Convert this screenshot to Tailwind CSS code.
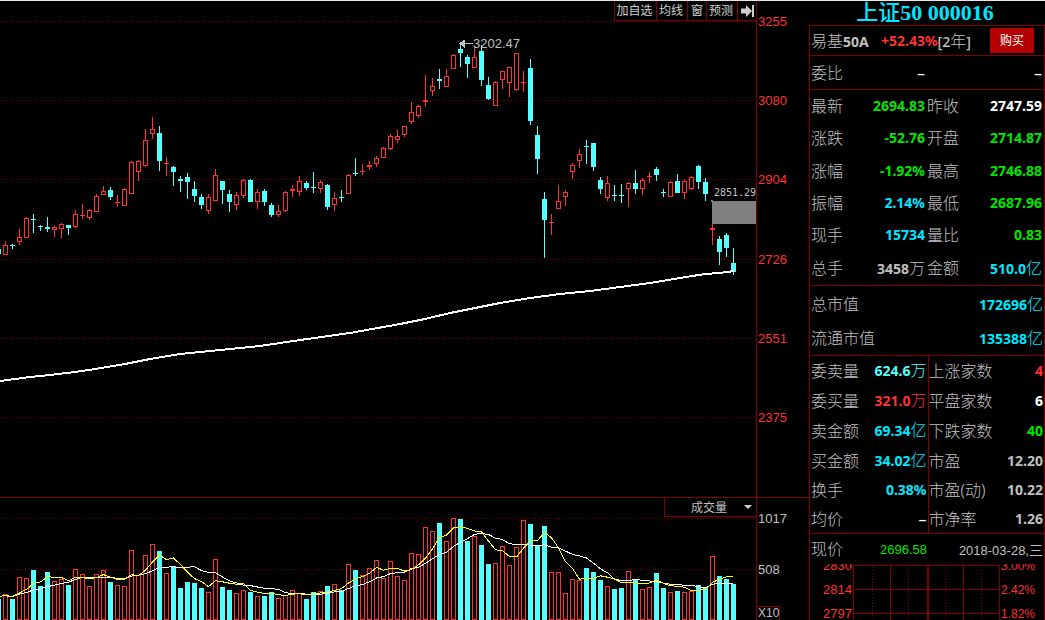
<!DOCTYPE html>
<html lang="zh-CN">
<head>
<meta charset="utf-8">
<title>上证50 000016</title>
<script src="https://cdn.jsdelivr.net/npm/@tailwindcss/browser@4"></script>
</head>
<body class="flex h-screen flex-col overflow-hidden border-t border-[#e8e8e8] bg-black font-['Liberation_Sans','Noto_Sans_CJK_SC',sans-serif] text-[13px] text-[#c0c0c0]">
<div class="flex min-h-0 flex-1">

  <main class="relative flex min-w-0 flex-1 flex-col">
    <div class="flex h-[496px] shrink-0">
      <section class="relative min-w-0 flex-1 border-r border-[#800000]" aria-label="K线图">
        <svg id="price" class="absolute inset-0 size-full" shape-rendering="crispEdges"></svg>
        <nav class="absolute top-0 right-0 flex h-5 border-b border-l border-[#800000] bg-black text-[12px] leading-[18px] text-[#d0d0d0] divide-x divide-[#800000]">
          <button class="w-[42px] pt-px pr-0.5">加自选</button>
          <button class="w-[31px] pt-px pr-0.5">均线</button>
          <button class="w-[19px] pt-px">窗</button>
          <button class="w-[31px] pt-px pr-0.5">预测</button>
          <button class="flex w-[18px] items-center justify-center" aria-label="收起">
            <svg width="13" height="12" fill="#d0d0d0"><path d="M0 3.5h5V0l6 6-6 6V8.500H0zM11 0h2v12h-2z"/></svg>
          </button>
        </nav>
      </section>
      <div class="flex w-[52px] flex-col text-[#ff3232]">
        <div class="flex h-[421px] flex-col justify-between pt-[13px] pl-px leading-4">
          <span>3255</span><span>3080</span><span>2904</span><span>2726</span><span>2551</span><span class="-mb-1">2375</span>
        </div>
      </div>
    </div>
    <div class="flex min-h-0 flex-1 border-t border-[#800000]">
      <section class="relative min-w-0 flex-1 border-r border-[#800000]" aria-label="成交量图">
        <svg id="volume" class="absolute inset-0 size-full" shape-rendering="crispEdges"></svg>
        <div class="absolute top-0 right-0 flex h-[19px] w-[92px] items-center border-b border-l border-[#800000] bg-black">
          <select aria-label="指标" class="h-full w-full appearance-none bg-transparent pt-0.5 pl-[26px] text-[12px] leading-4 text-[#c0c0c0] outline-none"><option>成交量</option></select>
          <svg class="pointer-events-none absolute right-[4px]" width="8" height="4" fill="#d0d0d0"><path d="M0 0h8L4 4z"/></svg>
        </div>
      </section>
      <div class="flex w-[52px] flex-col justify-between pt-[13px] leading-4">
        <div class="flex flex-col gap-[35px] pl-px"><span>1017</span><span>508</span></div>
        <div class="w-[23px] border-t border-r border-[#800000] text-[12px] leading-[13px]"><span class="pl-px">X10</span></div>
      </div>
    </div>
  </main>

  <aside class="flex w-[236px] shrink-0 flex-col">
    <h1 class="h-6 pr-1 text-center font-['Liberation_Serif','Noto_Sans_CJK_SC',serif] text-[22px] leading-6 font-bold text-[#00e6ff]"><span class="font-medium">上证</span>50 000016</h1>

    <div class="flex min-h-0 flex-1 flex-col divide-y divide-[#800000] border-x border-t border-[#800000] font-['Noto_Sans','Noto_Sans_CJK_SC',sans-serif] text-[14px] font-bold">
      <div class="flex h-[30px] shrink-0 items-center pl-px">
        <span class="w-[70px]"><span class="text-[16px] font-light">易基</span>50A</span>
        <span class="text-[#ff3232]">+52.43%</span><span class="font-medium">[2<span class="text-[16px] font-light">年</span>]</span>
        <button class="mr-[10px] ml-auto h-[25px] w-11 bg-[#b40000] text-[12px] font-normal text-white">购买</button>
      </div>
      <div class="flex h-[34px] shrink-0 items-center pr-0.5 pl-px">
        <span class="w-[69px] text-[16px] font-light">委比</span>
        <span class="w-[45px] text-right text-[16px] font-normal text-white">–</span>
        <span class="ml-auto text-[16px] font-normal text-white">–</span>
      </div>

      <div class="h-[196px] shrink-0">
        <table class="h-[195px] w-full table-fixed border-collapse leading-6">
          <colgroup><col class="w-[46px]"><col class="w-[70px]"><col class="w-[48px]"><col></colgroup>
          <tbody class="[&_th]:p-0 [&_th]:pl-px [&_th]:text-left [&_th]:text-[16px] [&_th]:font-light [&_th]:whitespace-nowrap [&_td]:p-0 [&_td]:pr-px [&_td]:text-right [&_td]:whitespace-nowrap [&_td:last-child]:pr-0.5">
            <tr><th>最新</th><td class="text-[#00e600]">2694.83</td><th>昨收</th><td class="text-white">2747.59</td></tr>
            <tr><th>涨跌</th><td class="text-[#00e600]">-52.76</td><th>开盘</th><td class="text-[#00e600]">2714.87</td></tr>
            <tr><th>涨幅</th><td class="text-[#00e600]">-1.92%</td><th>最高</th><td class="text-[#00e600]">2746.88</td></tr>
            <tr><th>振幅</th><td class="text-[#00e6ff]">2.14%</td><th>最低</th><td class="text-[#00e600]">2687.96</td></tr>
            <tr><th>现手</th><td class="text-[#00e6ff]">15734</td><th>量比</th><td class="text-[#00e600]">0.83</td></tr>
            <tr><th>总手</th><td>3458<span class="text-[16px] font-light">万</span></td><th>金额</th><td class="text-[#00e6ff]">510.0<span class="text-[16px] font-light">亿</span></td></tr>
          </tbody>
        </table>
      </div>

      <div class="flex h-[70px] shrink-0 flex-col text-[#00e6ff]">
        <div class="flex h-[35px] items-center justify-between pr-px pl-px"><span class="text-[16px] font-light text-[#c0c0c0]">总市值</span><span>172696<span class="text-[16px] font-light">亿</span></span></div>
        <div class="flex h-[34px] items-center justify-between pr-px pl-px"><span class="text-[16px] font-light text-[#c0c0c0]">流通市值</span><span>135388<span class="text-[16px] font-light">亿</span></span></div>
      </div>

      <div class="h-[178px] shrink-0">
        <table class="h-[177px] w-full table-fixed border-collapse leading-6">
          <colgroup><col class="w-[52px]"><col class="w-[66px]"><col class="w-[68px]"><col></colgroup>
          <tbody class="[&_th]:p-0 [&_th]:pl-px [&_th]:text-left [&_th]:text-[16px] [&_th]:font-light [&_th]:whitespace-nowrap [&_td]:p-0 [&_td]:pr-px [&_td]:text-right [&_td]:whitespace-nowrap [&_td:nth-child(2)]:border-r [&_td:nth-child(2)]:border-[#800000] [&_th:nth-child(3)]:pl-0">
            <tr><th>委卖量</th><td class="text-[#54ffff]">624.6<span class="text-[16px] font-light">万</span></td><th>上涨家数</th><td class="text-[#ff3232]">4</td></tr>
            <tr><th>委买量</th><td class="text-[#ff3232]">321.0<span class="text-[16px] font-light">万</span></td><th>平盘家数</th><td class="text-white">6</td></tr>
            <tr><th>卖金额</th><td class="text-[#00e6ff]">69.34<span class="text-[16px] font-light">亿</span></td><th>下跌家数</th><td class="text-[#00e600]">40</td></tr>
            <tr><th>买金额</th><td class="text-[#00e6ff]">34.02<span class="text-[16px] font-light">亿</span></td><th>市盈</th><td>12.20</td></tr>
            <tr><th>换手</th><td class="text-[#00e6ff]">0.38%</td><th>市盈(动)</th><td>10.22</td></tr>
            <tr><th>均价</th><td class="text-[16px] font-normal text-white">–</td><th>市净率</th><td>1.26</td></tr>
          </tbody>
        </table>
      </div>

      <div class="flex min-h-0 flex-1 flex-col font-['Liberation_Sans','Noto_Sans_CJK_SC',sans-serif] text-[13px] font-normal">
        <div class="flex h-[30px] shrink-0 items-center pt-0.5 pr-px pl-px">
          <span class="w-[69px] text-[16px] font-light">现价</span>
          <span class="text-[#00e600]">2696.58</span>
          <span class="ml-auto">2018-03-28,<span class="text-[14px]">三</span></span>
        </div>
        <div class="flex min-h-0 flex-1 overflow-hidden text-[#ff3232]">
          <div class="-mt-[6px] flex w-[43px] flex-col gap-2 pr-px text-right leading-4"><span>2830</span><span>2814</span><span>2797</span></div>
          <svg class="mt-px h-full w-[147px]" shape-rendering="crispEdges" fill="none" stroke="#800000">
            <path d="M0 .5h147M0 24.500h147M0 48.500h147M.5 0v60M37.500 0v60M110.500 0v60M146.500 0v60"/>
            <path stroke-width="2" d="M75 0v60"/>
            <path stroke-dasharray="1 2" d="M19.500 2v58M55.500 2v58M92.500 2v58M128.500 2v58"/>
          </svg>
          <div class="-mt-[6px] flex flex-col gap-2 pl-px text-[12px] leading-4"><span>3.00%</span><span>2.42%</span><span>1.82%</span></div>
        </div>
      </div>
    </div>
  </aside>
</div>

<script>
// One entry per trading day: direction, high, body top, body bottom, low, volume bar top
const days = `c 249 249 254 254 599
r 241 245 255 255 594
c 244 245 246 249 599
r 229 237 242 245 577
r 217 218 238 238 578
c 214 219 220 233 570
c 225 226 227 231 586
c 217 227 229 232 572
r 226 227 230 237 581
r 223 224 229 238 579
c 225 225 228 235 585
r 210 214 227 228 569
r 204 215 216 219 574
r 209 210 218 220 586
r 194 196 212 212 574
r 186 191 195 195 570
c 187 190 197 200 582
r 195 202 203 207 585
r 188 189 206 206 586
r 161 162 194 194 550
r 160 161 172 181 575
r 129 140 166 167 555
r 117 129 134 139 544
c 126 133 161 171 551
r 157 163 164 176 573
c 166 167 172 186 567
c 176 179 181 192 588
c 173 177 182 199 582
c 181 189 196 202 583
c 194 197 205 209 588
r 194 197 211 214 592
r 169 175 201 201 559
c 181 181 190 204 587
c 190 194 202 212 590
r 192 195 205 210 593
r 179 180 196 198 590
c 179 180 202 202 592
r 189 192 202 209 596
c 189 191 202 206 596
c 203 205 215 217 592
r 205 211 215 217 598
r 191 192 211 212 595
r 185 189 191 197 590
r 176 181 192 196 593
c 181 183 188 190 599
c 172 187 188 193 592
r 180 182 189 193 591
c 184 185 207 210 586
r 192 198 205 211 584
c 190 197 198 202 590
r 174 175 194 194 564
c 158 173 174 176 570
r 164 171 172 175 575
r 161 165 167 170 568
r 156 158 164 167 560
r 147 148 158 158 578
r 134 136 149 150 561
r 130 136 140 143 576
r 126 126 135 137 580
r 102 112 122 124 553
r 105 106 116 118 554
r 75 100 102 107 527
r 78 86 91 96 531
c 69 79 81 89 523
r 69 76 87 87 541
r 54 55 69 69 518
c 43 49 53 67 519
c 55 57 64 78 541
r 47 57 68 68 536
c 45 51 80 86 545
c 77 85 99 100 564
r 81 82 106 106 563
r 71 71 80 89 546
r 67 67 83 97 565
r 53 53 90 91 547
r 71 82 83 92 520
c 59 68 121 125 524
c 126 135 159 174 546
c 192 199 220 258 526
r 214 222 223 235 572
r 185 201 209 209 572
r 190 192 197 206 593
r 163 165 172 179 579
r 149 154 161 168 580
c 140 146 147 164 568
c 143 143 167 171 572
c 177 180 189 194 580
r 176 183 198 201 586
c 185 195 196 201 589
c 184 195 196 203 588
r 182 183 189 207 571
c 170 183 189 194 580
r 178 180 189 195 589
r 172 176 177 183 587
c 167 169 175 181 573
c 189 192 193 197 588
r 181 182 197 197 592
c 174 181 193 193 591
r 180 181 193 199 592
r 176 177 189 190 591
c 165 166 182 189 585
c 178 182 194 201 588
r 224 228 230 245 556
c 236 239 252 265 576
c 233 235 248 257 579
c 248 263 272 275 584`.split('\n').map(l => { const [d, ...n] = l.split(' '); return [d, ...n.map(Number)]; });

const RED = '#ff3232', CYAN = '#54ffff', GRID = '#800000';
const rect = (x, y, w, h, c) => `<rect x="${x}" y="${y}" width="${w}" height="${h}" fill="${c}"/>`;
const hollow = (x, y, w, h) => h < 3 ? rect(x, y, w, h, RED)
  : `<rect x="${x + .5}" y="${y + .5}" width="${w - 1}" height="${h - 1}" fill="black" stroke="${RED}"/>`;
const grid = y => `<line x1="1" x2="100%" y1="${y + .5}" y2="${y + .5}" stroke="${GRID}" stroke-dasharray="1 2"/>`;
const line = (pts, c, w) => `<polyline points="${pts.map(p => p.join()).join(' ')}" fill="none" stroke="${c}" stroke-width="${w}"/>`;

let p = [21, 100, 179, 259, 338, 417].map(grid).join('');
let v = [518, 569].map(grid).join('');
days.forEach(([d, hi, top, bot, lo, vol], i) => {
  const x = i * 7 - 4, c = d === 'r' ? RED : CYAN;
  p += rect(x + 2, hi, 1, lo - hi, c);
  p += d === 'r' ? hollow(x, top, 5, bot - top) : rect(x, top, 5, bot - top, c);
  v += d === 'r' ? hollow(x, vol, 5, 620 - vol) : rect(x, vol, 5, 620 - vol, c);
});

// 250-day average
p += line([[0,381],[30,377],[50,375],[75,372],[95,369],[125,364],[150,359],[180,354],[210,351],[260,346],[300,340],[350,333],[400,324],[425,319],[450,313],[475,308],[500,303],[530,298],[560,294],[590,291],[620,287],[650,283],[680,278],[705,274],[720,273],[734,271]], 'white', 2);
p += rect(712, 201, '100%', 23, '#808080') + rect(711, 200, 2, 2, '#808080');
p += `<path d="M461 43.500h12M460 43.500l4-3v6z" stroke="#c0c0c0" fill="#c0c0c0"/>`;
p += `<text x="473" y="48" font-size="13" fill="#c0c0c0">3202.47</text>`;
p += `<text x="714" y="196" font-size="10" font-family="DejaVu Sans Mono, monospace" fill="#c0c0c0">2851.29</text>`;
document.getElementById('price').innerHTML = `<g transform="translate(0,-1)">${p}</g>`;

// 5- and 10-day volume averages
const vols = [596, 597, 596, 595, 596, 596, 595, 595, 596, ...days.map(d => d[5])];
const avg = n => days.map((_, i) => [i * 7 - 2 + .5, vols.slice(i + 10 - n, i + 10).reduce((a, b) => a + b) / n]);
v += line(avg(10), 'white', 1) + line(avg(5), '#ffff00', 1);
document.getElementById('volume').innerHTML = `<g transform="translate(0,-498)">${v}</g>`;
</script>
</body>
</html>
